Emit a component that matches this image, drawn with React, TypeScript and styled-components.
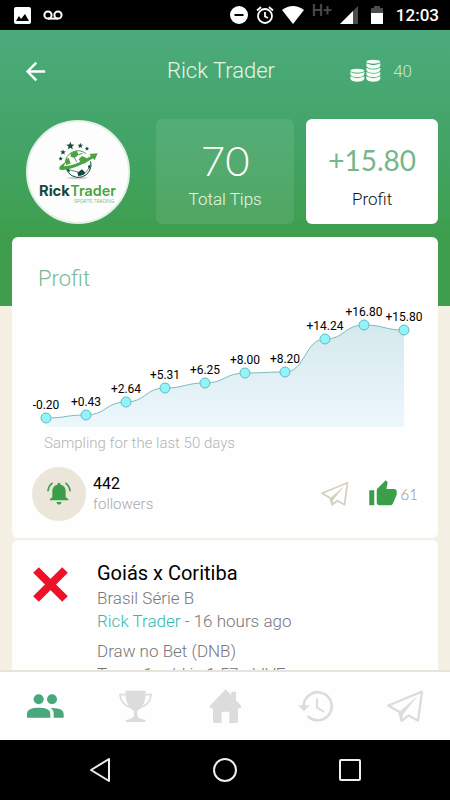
import React from "react";
import styled, { createGlobalStyle } from "styled-components";
import { MdArrowBack, MdThumbUp } from "react-icons/md";

const GlobalStyle = createGlobalStyle`
  * { box-sizing: border-box; }
  body { margin: 0; background: #000; font-family: Roboto, "Liberation Sans", sans-serif; font-weight: 300; }
  h1, h2, h3, p { margin: 0; font-weight: 300; }
  button { border: 0; padding: 0; background: none; font: inherit; color: inherit; cursor: pointer; }
  svg { display: block; flex: none; }
`;

const Screen = styled.div`
  height: 100vh;
  display: flex;
  flex-direction: column;
  background: #f4f0e3;
`;

const StatusBar = styled.div`
  flex: none;
  height: 30px;
  padding: 0 11px 0 14px;
  display: flex;
  align-items: center;
  background: #000;
  color: #fff;
`;

const StatusGroup = styled.div<{ $gap: number }>`
  display: flex;
  align-items: center;
  gap: ${(p) => p.$gap}px;
`;

const Spacer = styled.div`
  flex: 1;
`;

const Network = styled.span`
  align-self: flex-start;
  font-size: 16px;
  line-height: 22px;
  font-weight: 500;
  color: #4c4c4c;
`;

const Clock = styled.span`
  font-size: 17px;
  line-height: 30px;
  font-weight: 500;
`;

const Content = styled.main`
  flex: 1;
  min-height: 0;
  overflow: hidden;
  padding: 0 12px;
  background: linear-gradient(#4bab7c, #43a467 40%, #3e9e4d 75%) top / 100% 276px no-repeat, #f4f0e3;
`;

const Header = styled.header`
  height: 82px;
  display: grid;
  grid-template-columns: 1fr auto 1fr;
  align-items: center;
  color: #e4f6ea;
`;

const IconButton = styled.button`
  display: flex;
  align-items: center;
  justify-content: center;
`;

const BackButton = styled(IconButton)`
  width: 46px;
  height: 46px;
  color: #fff;
`;

const Title = styled.h1`
  padding-right: 8px;
  font-size: 22px;
  line-height: 28px;
`;

const Coins = styled.div`
  justify-self: end;
  padding-right: 26px;
  display: flex;
  align-items: center;
  gap: 12px;
  font-size: 17px;
  color: #c6e6d0;
`;

const Hero = styled.section`
  padding: 7px 0 13px 14px;
  display: flex;
  align-items: center;
  gap: 12px;
`;

const Avatar = styled.div`
  flex: none;
  width: 104px;
  height: 104px;
  margin-right: 14px;
  border: 2px solid #e3eee5;
  border-radius: 50%;
  overflow: hidden;
  background: #fdfdfd;
`;

const Stat = styled.div<{ $solid?: boolean }>`
  flex: ${(p) => (p.$solid ? 20 : 21)} 1 0;
  height: 105px;
  padding-top: 16px;
  border-radius: 6px;
  text-align: center;
  background: ${(p) => (p.$solid ? "#fff" : "rgba(255, 255, 255, 0.09)")};
  color: ${(p) => (p.$solid ? "#111" : "#e9f8ec")};
`;

const StatValue = styled.div<{ $size: number; $color: string; $weight: number }>`
  height: 50px;
  line-height: 50px;
  font-family: Lato, sans-serif;
  font-size: ${(p) => p.$size}px;
  font-weight: ${(p) => p.$weight};
  color: ${(p) => p.$color};
`;

const StatLabel = styled.div`
  font-size: 17px;
  line-height: 28px;
`;

const Card = styled.section`
  margin-bottom: 2px;
  border-radius: 6px;
  background: #fefefe;
`;

const CardTitle = styled.h2`
  padding: 28px 26px 0;
  font-size: 22px;
  line-height: 28px;
  color: #76bb91;
`;

const Chart = styled.svg`
  width: 100%;
  height: auto;
  margin-top: 6px;
`;

const Caption = styled.p`
  padding: 4px 32px 0;
  font-size: 15px;
  line-height: 20px;
  color: #b4b4b4;
`;

const Social = styled.div`
  padding: 14px 20px 17px;
  display: flex;
  align-items: center;
`;

const Bell = styled(IconButton)`
  width: 54px;
  height: 54px;
  margin-right: 7px;
  border-radius: 50%;
  background: #ece6da;
`;

const FollowCount = styled.p`
  font-size: 16px;
  line-height: 20px;
  font-weight: 400;
  color: #000;
`;

const FollowLabel = styled.p`
  font-size: 15px;
  line-height: 20px;
  color: #aaa;
`;

const Share = styled(IconButton)`
  color: #d4d0bd;
`;

const Like = styled(IconButton)`
  margin-left: 19px;
  gap: 3px;
  font-family: Lato, sans-serif;
  font-size: 15px;
  color: #8a8d93;
`;

const Tip = styled(Card)`
  padding: 19px 20px;
  display: flex;
  gap: 28px;
`;

const Loss = styled.svg`
  margin-top: 7px;
`;

const TipName = styled.h3`
  font-size: 20px;
  line-height: 28px;
  font-weight: 400;
  color: #000;
`;

const TipLine = styled.p<{ $spaced?: boolean }>`
  margin-top: ${(p) => (p.$spaced ? 7 : 0)}px;
  font-size: 17px;
  line-height: 23px;
  color: #77777c;
`;

const Author = styled.a`
  color: #35b8ae;
  text-decoration: none;
`;

const TabBar = styled.nav`
  flex: none;
  height: 70px;
  display: grid;
  grid-template-columns: repeat(5, 1fr);
  border-top: 2px solid #e9e4da;
  background: #fefefe;
`;

const Tab = styled(IconButton)<{ $active?: boolean }>`
  color: ${(p) => (p.$active ? "#48a87b" : "#dcdcdc")};
`;

const SystemBar = styled.nav`
  flex: none;
  height: 60px;
  padding: 0 37px;
  display: grid;
  grid-template-columns: repeat(3, 1fr);
  background: #000;
  color: #eee;
`;

const PlaneIcon = ({ size }: { size: number }) => (
  <svg width={size} height={size} viewBox="0 0 112 98" fill="none" stroke="currentColor" strokeWidth="7" strokeLinejoin="round" strokeLinecap="round" aria-hidden>
    <path d="M4 46 106 4 94 92 66 76 44 92 38 66Z" />
    <path d="M38 66 88 22 48 72 44 92Z" fill="currentColor" strokeWidth="2" />
  </svg>
);

const CoinsIcon = () => (
  <svg width="31" height="24" viewBox="0 0 93 70" fill="#f4fcf5" aria-hidden>
    <ellipse cx="70" cy="7" rx="21" ry="6" />
    {[10, 23, 36, 49].map((y) => (
      <path key={y} d={`M49 ${y + 2}Q70 ${y + 13} 91 ${y + 2}V${y + 9}Q88 ${y + 18} 70 ${y + 18}T49 ${y + 9}Z`} />
    ))}
    <ellipse cx="22" cy="34" rx="21" ry="6" />
    {[36, 49].map((y) => (
      <path key={y} d={`M1 ${y + 2}Q22 ${y + 13} 43 ${y + 2}V${y + 9}Q40 ${y + 18} 22 ${y + 18}T1 ${y + 9}Z`} />
    ))}
  </svg>
);

const star = (cx: number, cy: number, r: number) =>
  Array.from({ length: 10 }, (_, i) => {
    const a = (Math.PI * i) / 5 - Math.PI / 2;
    const k = i % 2 ? r * 0.42 : r;
    return `${(cx + k * Math.cos(a)).toFixed(1)},${(cy + k * Math.sin(a)).toFixed(1)}`;
  }).join(" ");

const Logo = () => (
  <svg width="100" height="100" viewBox="0 0 300 300" role="img" aria-label="Rick Trader Sports Trading">
    <defs>
      <clipPath id="ball"><circle cx="150" cy="124" r="38" /></clipPath>
    </defs>
    <ellipse cx="148" cy="168" rx="30" ry="4" fill="#d4d4d4" />
    <g clipPath="url(#ball)">
      <circle cx="150" cy="124" r="38" fill="#fff" />
      <path d="M128 92 146 86 152 98 140 108 128 104ZM162 102 176 108 174 124 160 124 152 112ZM112 112 122 108 128 124 114 130Z" fill="#4ba43f" />
      <path d="M148 152 162 142 172 152 164 166H152ZM114 136 126 144 122 156 112 150ZM180 132 190 126V142H182Z" fill="#0f4a40" />
      <path d="M140 108 146 120M152 98 164 94M126 144 150 150M172 152 182 140" stroke="#0f4a40" strokeWidth="2" />
    </g>
    <path d="M112 124A38 38 0 0 1 174 95" fill="none" stroke="#4ba43f" strokeWidth="3" />
    <path d="M188 118A38 38 0 0 1 114 138" fill="none" stroke="#0f4a40" strokeWidth="3" />
    <path d="M112 121Q90 134 94 141C100 151 150 138 195 109L200 115 209 94 184 96 189 102Q140 132 108 133Z" fill="#4ba43f" />
    <g fill="#17493f">
      <polygon points={star(98, 110, 7)} />
      <polygon points={star(105, 91, 9)} />
      <polygon points={star(127, 72, 13)} />
      <polygon points={star(157, 71, 9)} />
      <polygon points={star(177, 80, 7)} />
    </g>
    <text x="33" y="222" fontFamily="Inter, sans-serif" fontSize="44" fontWeight="700" fill="#0f4a40">Rick</text>
    <text x="127" y="222" fontFamily="Inter, sans-serif" fontSize="43" fontWeight="600" fill="#4ba43f">Trader</text>
    <text x="138" y="242" fontFamily="Roboto, sans-serif" fontSize="15" fill="#4ba43f">SPORTS TRADING</text>
  </svg>
);

const samples = [-0.2, 0.43, 2.64, 5.31, 6.25, 8, 8.2, 14.24, 16.8, 15.8];
const points = samples.map((value, i) => ({
  value,
  x: Math.round(34 + i * 39.8),
  y: Math.round(118 - value * 5.5),
}));
const curve = points.reduce((d, p, i) => {
  if (i === 0) return `M${p.x} ${p.y}`;
  const mid = (points[i - 1].x + p.x) / 2;
  return `${d}C${mid} ${points[i - 1].y} ${mid} ${p.y} ${p.x} ${p.y}`;
}, "");

const ProfitChart = () => (
  <Chart viewBox="0 0 426 130" role="img" aria-label="Profit over the last 50 days">
    <defs>
      <linearGradient id="area" x1="0" y1="0" x2="0" y2="1">
        <stop offset="0" stopColor="#d5e9ec" />
        <stop offset="1" stopColor="#ecf7fc" />
      </linearGradient>
    </defs>
    <path d={`${curve}V128H34Z`} fill="url(#area)" />
    <path d={curve} fill="none" stroke="#7cbcba" strokeWidth="1" />
    {points.map((p) => (
      <g key={p.x}>
        <circle cx={p.x} cy={p.y} r="5" fill="#8ff5fb" stroke="#69b9c0" />
        <text x={p.x} y={p.y - 9} textAnchor="middle" fontSize="12" fontWeight="400" fill="#000">
          {(p.value > 0 ? "+" : "") + p.value.toFixed(2)}
        </text>
      </g>
    ))}
  </Chart>
);

export default function App() {
  return (
    <Screen>
      <GlobalStyle />
      <StatusBar>
        <StatusGroup $gap={12}>
          <svg width="17" height="17" viewBox="0 0 17 17" aria-hidden>
            <rect width="17" height="17" rx="2" fill="#fff" />
            <path d="M2 14 5 9 7 12 11 7 15 14Z" fill="#000" />
          </svg>
          <svg width="20" height="10" viewBox="0 0 20 10" fill="none" stroke="#fff" strokeWidth="2" aria-hidden>
            <circle cx="5" cy="5" r="3.6" />
            <circle cx="15" cy="5" r="3.6" />
            <path d="M5 8.6H15" />
          </svg>
        </StatusGroup>
        <Spacer />
        <StatusGroup $gap={8}>
          <svg width="18" height="18" viewBox="0 0 18 18" aria-hidden>
            <circle cx="9" cy="9" r="9" fill="#fff" />
            <path d="M4.500 9H13.500" stroke="#000" strokeWidth="2" />
          </svg>
          <svg width="18" height="18" viewBox="0 0 18 18" fill="none" stroke="#fff" strokeWidth="1.800" aria-hidden>
            <circle cx="9" cy="10" r="7" />
            <path d="M9 6V10.500L12 12M1 4.500 5 1M17 4.500 13 1" />
          </svg>
          <svg width="22" height="18" viewBox="0 0 22 18" aria-hidden>
            <path d="M0 4Q11 -4 22 4L11 18Z" fill="#fff" />
          </svg>
          <Network>H+</Network>
          <svg width="18" height="18" viewBox="0 0 18 18" aria-hidden>
            <path d="M0 18 18 0V18Z" fill="#4c4c4c" />
            <path d="M0 18 13 5V18Z" fill="#fff" />
          </svg>
          <svg width="22" height="18" viewBox="0 0 22 18" aria-hidden>
            <path d="M5 2H8V0H14V2H17V7H5Z" fill="#4c4c4c" />
            <path d="M5 7H17V18H5Z" fill="#fff" />
          </svg>
          <Clock>12:03</Clock>
        </StatusGroup>
      </StatusBar>

      <Content>
        <Header>
          <BackButton aria-label="Back"><MdArrowBack size={29} /></BackButton>
          <Title>Rick Trader</Title>
          <Coins><CoinsIcon /><span>40</span></Coins>
        </Header>

        <Hero>
          <Avatar><Logo /></Avatar>
          <Stat>
            <StatValue $size={42} $color="#fff" $weight={300}>70</StatValue>
            <StatLabel>Total Tips</StatLabel>
          </Stat>
          <Stat $solid>
            <StatValue $size={28} $color="#76b68a" $weight={400}>+15.80</StatValue>
            <StatLabel>Profit</StatLabel>
          </Stat>
        </Hero>

        <Card>
          <CardTitle>Profit</CardTitle>
          <ProfitChart />
          <Caption>Sampling for the last 50 days</Caption>
          <Social>
            <Bell aria-label="Notifications">
              <svg width="24" height="24" viewBox="0 0 72 72" fill="#3a9f48" aria-hidden>
                <path d="M9 55V51L16 46V26Q17 11 31 8Q31 2 36 2T41 8Q55 11 56 26V46L64 51V55ZM28 60H44Q42 68 36 68T28 60Z" />
                <path d="M3 26Q5 11 15 4M69 26Q67 11 57 4" fill="none" stroke="#3a9f48" strokeWidth="5" strokeLinecap="round" />
              </svg>
            </Bell>
            <div>
              <FollowCount>442</FollowCount>
              <FollowLabel>followers</FollowLabel>
            </div>
            <Spacer />
            <Share aria-label="Share"><PlaneIcon size={28} /></Share>
            <Like aria-label="61 likes">
              <MdThumbUp size={30} color="#3a9f48" />
              <span>61</span>
            </Like>
          </Social>
        </Card>

        <Tip>
          <Loss width="37" height="37" viewBox="0 0 37 37" role="img" aria-label="Lost">
            <path d="M4 4 33 33M33 4 4 33" stroke="#ee1228" strokeWidth="8" />
          </Loss>
          <div>
            <TipName>Goiás x Coritiba</TipName>
            <TipLine>Brasil Série B</TipLine>
            <TipLine><Author href="#rick-trader">Rick Trader</Author> - 16 hours ago</TipLine>
            <TipLine $spaced>Draw no Bet (DNB)</TipLine>
            <TipLine>Team 1 odd is 1.57 - LIVE</TipLine>
          </div>
        </Tip>
      </Content>

      <TabBar>
        <Tab $active aria-label="Tipsters">
          <svg width="37" height="26" viewBox="0 0 111 78" fill="currentColor" aria-hidden>
            <circle cx="35" cy="19" r="15" />
            <circle cx="75" cy="19" r="15" />
            <path d="M0 74V61Q0 44 35 44T70 61V74ZM71 45Q110 43 110 63V74H80V62Q80 51 71 45Z" />
          </svg>
        </Tab>
        <Tab aria-label="Ranking">
          <svg width="33" height="33" viewBox="0 0 99 99" fill="currentColor" aria-hidden>
            <path d="M19 2H80Q82 47 55 63V77Q57 85 79 90V96H21V90Q43 85 45 77V63Q18 47 19 2Z" />
            <path d="M20 14H3Q5 43 34 52M79 14H96Q94 43 65 52" fill="none" stroke="currentColor" strokeWidth="5" />
          </svg>
        </Tab>
        <Tab aria-label="Home">
          <svg width="33" height="35" viewBox="0 0 99 105" fill="currentColor" aria-hidden>
            <path d="M50 1 67 19V8H81V34L97 51Q98 59 87 58V97Q87 102 82 102H61V68H38V102H17Q12 102 12 97V58Q1 59 2 51Z" />
          </svg>
        </Tab>
        <Tab aria-label="History">
          <svg width="35" height="32" viewBox="0 0 105 96" fill="none" stroke="currentColor" aria-hidden>
            <path d="M17 48A42 42 0 1 1 31 80" strokeWidth="8" strokeLinecap="round" />
            <path d="M57 28V53L76 64" strokeWidth="6" strokeLinecap="round" />
            <path d="M0 46H35L18 64Z" fill="currentColor" stroke="none" />
          </svg>
        </Tab>
        <Tab aria-label="Send"><PlaneIcon size={37} /></Tab>
      </TabBar>

      <SystemBar>
        <IconButton aria-label="System back">
          <svg width="24" height="24" viewBox="0 0 24 24" fill="none" stroke="currentColor" strokeWidth="2" strokeLinejoin="round" aria-hidden><path d="M21 1V23L3 12Z" /></svg>
        </IconButton>
        <IconButton aria-label="System home">
          <svg width="24" height="24" viewBox="0 0 24 24" fill="none" stroke="currentColor" strokeWidth="2" aria-hidden><circle cx="12" cy="12" r="11" /></svg>
        </IconButton>
        <IconButton aria-label="Recent apps">
          <svg width="22" height="22" viewBox="0 0 22 22" fill="none" stroke="currentColor" strokeWidth="2" aria-hidden><rect x="1" y="1" width="20" height="20" rx="1" /></svg>
        </IconButton>
      </SystemBar>
    </Screen>
  );
}
